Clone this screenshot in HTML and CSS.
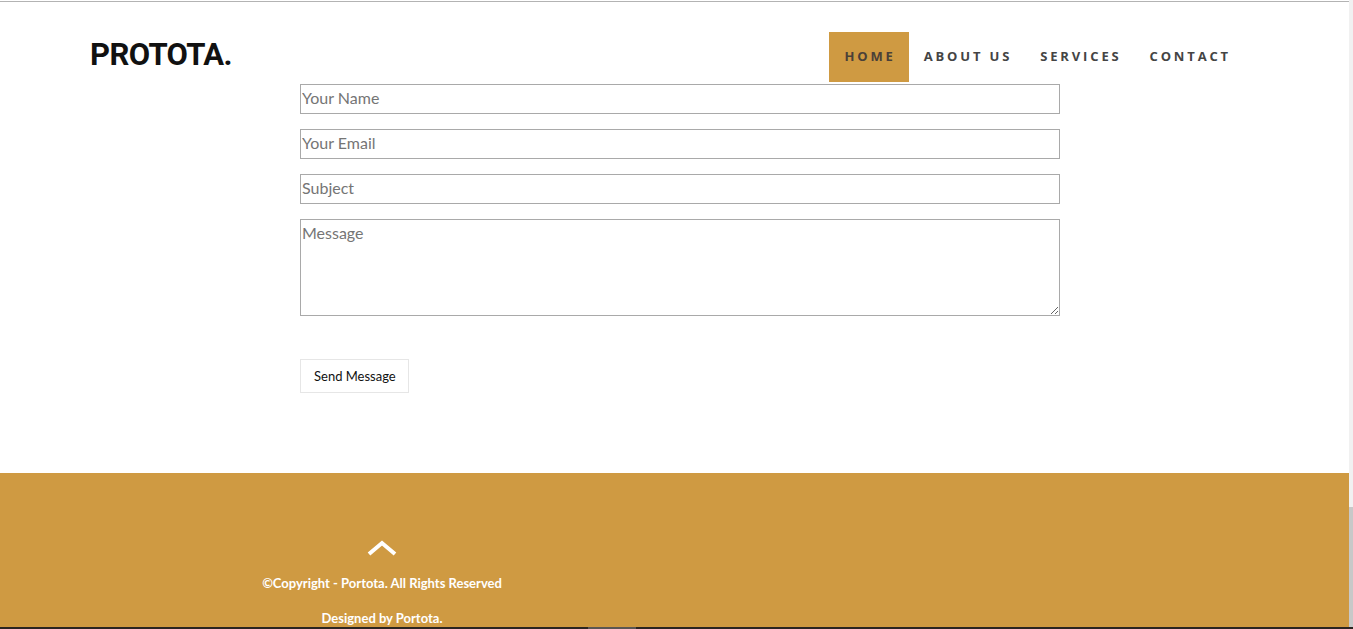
FILE: index.html
```html
<!DOCTYPE html>
<html>
<head>
<meta charset="utf-8">
<link rel="stylesheet" href="styles.css">
</head>
<body>
<div class="screen">
  <div class="page">
    <header class="header">
      <div class="logo">PROTOTA.</div>
      <nav class="nav">
        <a class="nav-item active">HOME</a>
        <a class="nav-item">ABOUT US</a>
        <a class="nav-item">SERVICES</a>
        <a class="nav-item">CONTACT</a>
      </nav>
    </header>
    <main class="contact">
      <form class="form">
        <input class="field" type="text" placeholder="Your Name">
        <input class="field" type="email" placeholder="Your Email">
        <input class="field" type="text" placeholder="Subject">
        <textarea class="field area" placeholder="Message"></textarea>
        <button class="send" type="button">Send Message</button>
      </form>
    </main>
    <footer class="footer">
      <div class="foot-col">
        <svg class="up" width="30" height="16" viewBox="0 0 30 16"><polyline points="2,14 15,3 28,14" fill="none" stroke="#fff" stroke-width="4"/></svg>
        <p class="copy">©Copyright - Portota. All Rights Reserved</p>
        <p class="design">Designed by Portota.</p>
      </div>
    </footer>
  </div>
  <div class="scrollbar"><div class="thumb"></div></div>
</div>
<div class="taskbar"><div class="task-mark"></div></div>
</body>
</html>
```
FILE: styles.css
```css
html, body {
  margin: 0;
  padding: 0;
  height: 629px;
  overflow: hidden;
  background: #fff;
}
.screen {
  display: flex;
  height: 627px;
  padding-top: 1px;
  box-sizing: border-box;
}
.page {
  flex: 1;
  display: flex;
  flex-direction: column;
  border-top: 1px solid #b3b3b3;
  overflow: hidden;
}
.scrollbar {
  width: 4px;
  background: #f1f1f1;
  display: flex;
  flex-direction: column;
  justify-content: flex-end;
  margin-top: -1px;
}
.thumb {
  height: 120px;
  background: #c8c8c8;
}
.header {
  height: 81px;
  display: flex;
  align-items: flex-start;
  justify-content: space-between;
  padding: 0 105px 0 90px;
}
.logo {
  font-family: Roboto, "Liberation Sans", sans-serif;
  font-weight: 700;
  font-size: 31px;
  letter-spacing: -0.6px;
  color: #111;
  margin-top: 35px;
  line-height: 36px;
}
.nav {
  display: flex;
  margin-top: 30px;
}
.nav-item {
  display: block;
  height: 50px;
  line-height: 48px;
  padding: 0 13px 0 15px;
  font-family: "Open Sans", sans-serif;
  font-weight: 700;
  font-size: 13px;
  letter-spacing: 2.85px;
  color: #444;
}
.nav-item.active {
  background: #cf9a42;
  color: #4a4038;
}
.contact {
  height: 390px;
}
.form {
  width: 760px;
  margin: 1px 0 0 300px;
  display: flex;
  flex-direction: column;
  align-items: flex-start;
  gap: 15px;
}
.field {
  width: 760px;
  height: 30px;
  box-sizing: border-box;
  border: 1px solid #a9a9a9;
  padding: 0 1px 3px;
  margin: 0;
  font-family: Lato, "Noto Sans", sans-serif;
  font-size: 16px;
  color: #333;
  background: #fff;
  outline: none;
}
.field::placeholder {
  color: #757575;
}
.area {
  height: 97px;
  padding-top: 3px;
  resize: vertical;
}
.send {
  margin-top: 28px;
  height: 34px;
  padding: 0 12px 1px 13px;
  background: #fff;
  border: 1px solid #e6e6e6;
  font-family: Lato, "Noto Sans", sans-serif;
  font-size: 13px;
  color: #111;
}
.footer {
  flex: 1;
  background: #cf9a42;
}
.foot-col {
  width: 400px;
  margin-left: 182px;
  display: flex;
  flex-direction: column;
  align-items: center;
  padding-top: 67px;
  font-family: Lato, "Noto Sans", sans-serif;
  font-weight: 700;
  font-size: 13px;
  color: #fff;
}
.up {
  display: block;
}
.copy {
  margin: 19px 0 0;
  line-height: 16px;
}
.design {
  margin: 19px 0 0;
  line-height: 16px;
}
.taskbar {
  height: 2px;
  background: #2b2521;
}
.task-mark {
  width: 48px;
  height: 2px;
  margin-left: 588px;
  background: #5b5652;
}
```
